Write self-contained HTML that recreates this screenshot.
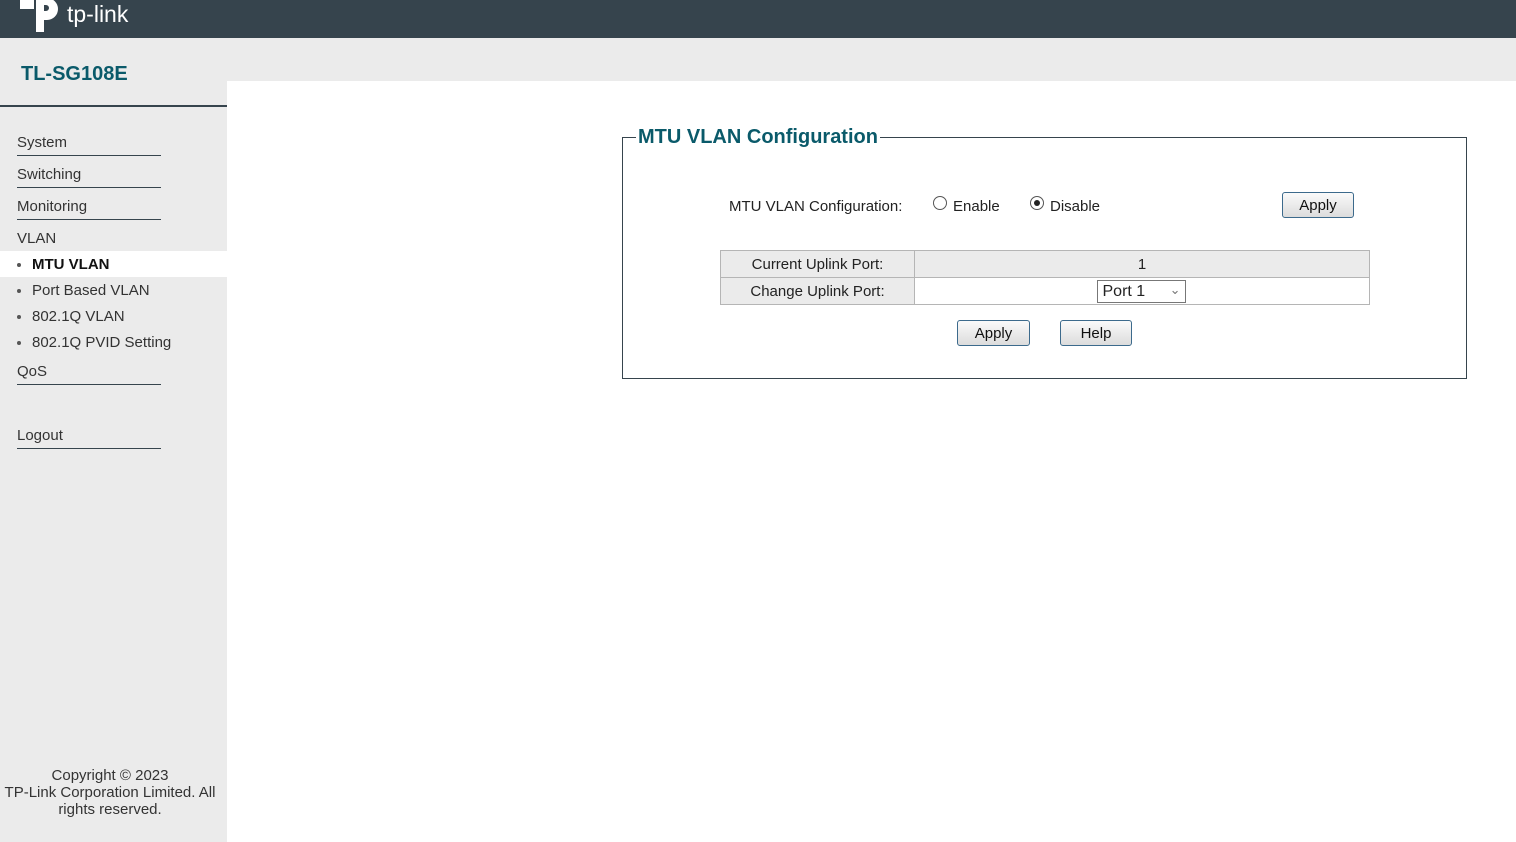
<!DOCTYPE html>
<html><head><meta charset="utf-8"><style>
*{margin:0;padding:0;box-sizing:border-box}
body{width:1516px;height:842px;position:relative;overflow:hidden;background:#fff;font-family:"Liberation Sans",Arial,sans-serif;color:#222}
.a{position:absolute}
#hdr{left:0;top:0;width:1516px;height:38px;background:#36444d}
#strip{left:0;top:38px;width:1516px;height:43px;background:#ebebeb}
#side{left:0;top:38px;width:227px;height:804px;background:#ebebeb}
.nav{left:17px;width:144px;font-size:15px;color:#333;border-bottom:1px solid #36444d;height:24px;line-height:22px}
.sub{left:0;width:227px;height:26px;font-size:15px;color:#333;line-height:28px;padding-left:32px}
.sub:before{content:"";position:absolute;left:17px;top:12px;width:4px;height:4px;border-radius:50%;background:#555}
.btn{height:26px;border:1px solid #3c6a8c;border-radius:3px;background:linear-gradient(#fafafa,#dcdcdc);font-size:15px;text-align:center;line-height:26px;color:#111}
.radio{width:14px;height:14px;border:1px solid #555;border-radius:50%;background:#fff}
td{border:1px solid #b5b5b5;font-size:15px;text-align:center;height:27px}
</style></head><body>
<div class="a" id="hdr">
<svg class="a" style="left:19px;top:-10px" width="46" height="42" viewBox="0 0 46 42"><path d="M1 8h14v11H1z M17 8h11a11 11 0 0 1 0 22h-4v-9h3a3 3 0 0 0 0-6h-2v27h-8z" fill="#fff"/></svg>
<div class="a" style="left:67px;top:1px;color:#fff;font-size:23px;line-height:26px">tp-link</div>
</div>
<div class="a" id="strip"></div>
<div class="a" id="side"></div>
<div class="a" style="left:21px;top:63px;font-size:20px;font-weight:bold;color:#0a5a6a">TL-SG108E</div>
<div class="a" style="left:0;top:105px;width:227px;height:2px;background:#36444d"></div>
<div class="a nav" style="top:132px">System</div>
<div class="a nav" style="top:164px">Switching</div>
<div class="a nav" style="top:196px">Monitoring</div>
<div class="a" style="left:17px;top:229px;font-size:15px;color:#333;line-height:20px">VLAN</div>
<div class="a sub" style="top:251px;background:#fff;font-weight:bold;color:#111">MTU VLAN</div>
<div class="a sub" style="top:277px">Port Based VLAN</div>
<div class="a sub" style="top:303px">802.1Q VLAN</div>
<div class="a sub" style="top:329px">802.1Q PVID Setting</div>
<div class="a nav" style="top:361px">QoS</div>
<div class="a nav" style="top:425px">Logout</div>
<div class="a" style="left:0;top:767px;width:220px;text-align:center;font-size:15px;line-height:17px;color:#333">Copyright © 2023<br>TP-Link Corporation Limited. All<br>rights reserved.</div>

<div class="a" style="left:622px;top:137px;width:845px;height:242px;border:1px solid #36444d"></div>
<div class="a" style="left:636px;top:126px;background:#fff;padding:0 2px;font-size:20px;font-weight:bold;color:#0a5a6a">MTU VLAN Configuration</div>
<div class="a" style="left:729px;top:198px;font-size:15px">MTU VLAN Configuration:</div>
<div class="a radio" style="left:933px;top:196px"></div>
<div class="a" style="left:953px;top:198px;font-size:15px">Enable</div>
<div class="a radio" style="left:1030px;top:196px"><div style="width:6px;height:6px;border-radius:50%;background:#222;margin:3px"></div></div>
<div class="a" style="left:1050px;top:198px;font-size:15px">Disable</div>
<div class="a btn" style="left:1282px;top:192px;width:72px">Apply</div>
<table class="a" style="left:720px;top:250px;width:650px;border-collapse:collapse">
<tr style="background:#ebebeb"><td style="width:194px">Current Uplink Port:</td><td>1</td></tr>
<tr><td style="background:#ebebeb">Change Uplink Port:</td><td style="background:#fff;padding:0"><div style="display:inline-block;width:89px;height:23px;border:1px solid #777;text-align:left;padding-left:5px;font-size:16px;line-height:22px;position:relative;margin-left:-2px">Port 1<span style="position:absolute;right:4px;top:-2px;font-size:13px;color:#777">&#8964;</span></div></td></tr>
</table>
<div class="a btn" style="left:957px;top:320px;width:73px">Apply</div>
<div class="a btn" style="left:1060px;top:320px;width:72px">Help</div>
</body></html>
